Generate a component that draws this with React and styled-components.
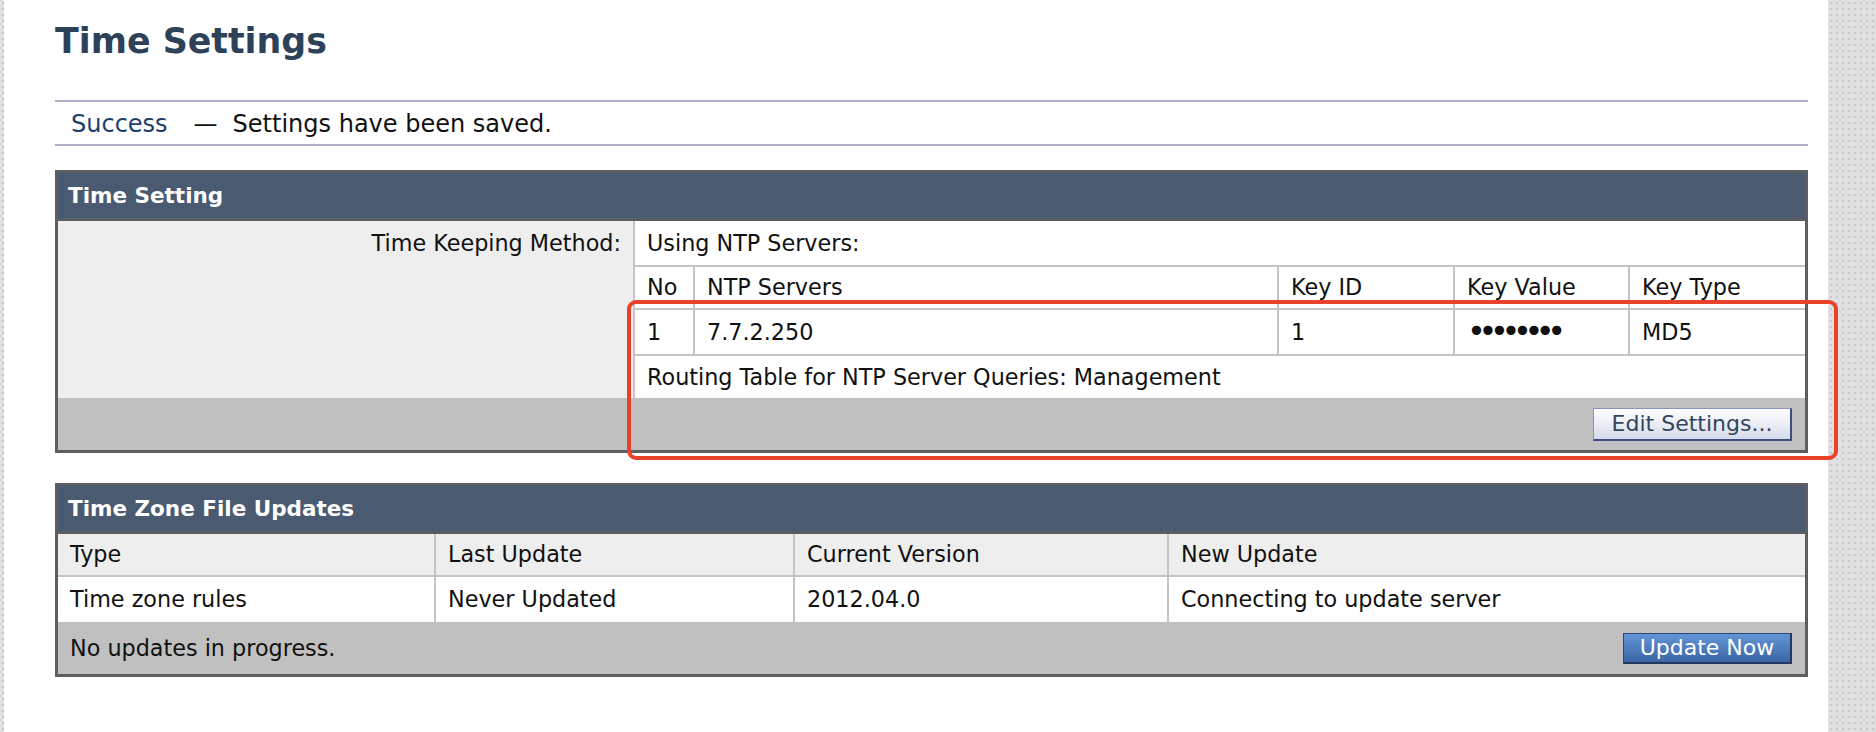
import React from 'react';
import styled, { createGlobalStyle } from 'styled-components';

const GlobalStyle = createGlobalStyle`
  body {
    margin: 0;
    background: #ffffff;
    font-family: "DejaVu Sans", Verdana, sans-serif;
    color: #111111;
  }
`;

const Page = styled.div`
  display: flex;
  min-height: 732px;
`;

// dotted grey gutters left and right
const Strip = styled.div`
  width: ${(p) => p.$w}px;
  flex-shrink: 0;
  background-color: #e0e0e0;
  background-image: radial-gradient(#c8c8c8 1px, transparent 1.4px);
  background-size: 6px 6px;
`;

const Main = styled.main`
  flex: 1;
  min-width: 0;
  padding: 24px 20px 0 51px;
`;

const Title = styled.h1`
  margin: 0;
  font-size: 34.8px;
  line-height: 34px;
  font-weight: bold;
  color: #2d4259;
`;

const Notice = styled.div`
  margin-top: 42px;
  box-sizing: border-box;
  height: 46px;
  border-top: 2px solid #adadc6;
  border-bottom: 2px solid #adadc6;
  padding: 3px 16px 0;
  line-height: 39px;
  font-size: 24px;
`;

const Status = styled.span`
  color: #1d3f6e;
`;

const Dash = styled.span`
  margin: 0 15px 0 26px;
`;

const PanelWrap = styled.div`
  position: relative;
  margin-top: ${(p) => p.$top}px;
`;

const Panel = styled.section`
  border: 3px solid #5e5e5e;
  font-size: 22.3px;
`;

const PanelHeader = styled.div`
  height: 48px;
  box-sizing: border-box;
  border-bottom: 3px solid #5a5d62;
  background: #4a5a71;
  color: #ffffff;
  font-weight: bold;
  font-size: 21.5px;
  line-height: 45px;
  padding-left: 10px;
`;

const SettingBody = styled.div`
  display: grid;
  grid-template-columns: 575px 1fr;
`;

const Label = styled.div`
  background: #eeeeee;
  text-align: right;
  padding-right: 12px;
  line-height: 44px;
`;

const Values = styled.div`
  display: grid;
  grid-template-columns: 58px 584px 176px 175px 1fr;
  border-left: 2px solid #c4c4c4;
  background: #ffffff;
`;

const Cell = styled.div`
  height: ${(p) => p.$h}px;
  line-height: ${(p) => p.$h}px;
  padding-left: 12px;
  white-space: nowrap;
  overflow: hidden;
  grid-column: ${(p) => (p.$span ? '1 / -1' : 'auto')};
  border-bottom: ${(p) => (p.$line ? '2px solid #c4c4c4' : 'none')};
  border-left: ${(p) => (p.$sep ? '2px solid #c4c4c4' : 'none')};
  background: ${(p) => p.$bg || 'transparent'};
`;

const Dots = styled.span`
  font-size: 32px;
  letter-spacing: -7.4px;
  vertical-align: -2px;
  line-height: 1;
`;

const Footer = styled.div`
  display: flex;
  align-items: center;
  justify-content: space-between;
  height: 52px;
  background: #c0c0c0;
  padding: 0 13px 0 12px;
`;

const EditButton = styled.button`
  height: 33px;
  width: 199px;
  padding: 0;
  font-family: inherit;
  font-size: 22px;
  color: #33455a;
  background: linear-gradient(#ffffff, #d6dbec);
  border: 1px solid #8a93bd;
  border-right: 2px solid #3e4d7c;
  border-bottom: 2px solid #3e4d7c;
`;

const UpdateButton = styled.button`
  height: 31px;
  width: 169px;
  padding: 0;
  font-family: inherit;
  font-size: 22px;
  color: #ffffff;
  background: linear-gradient(#6395d6, #3a66a5);
  border: 1px solid #2b4a7c;
  border-right: 2px solid #22385e;
  border-bottom: 2px solid #22385e;
`;

const ZoneGrid = styled.div`
  display: grid;
  grid-template-columns: 376px 359px 374px 1fr;
`;

// red annotation drawn over the NTP rows
const Highlight = styled.div`
  position: absolute;
  left: 572px;
  top: 130px;
  width: 1211px;
  height: 160px;
  box-sizing: border-box;
  border: 4px solid #e8432a;
  border-radius: 9px;
  pointer-events: none;
`;

const ntpHead = ['No', 'NTP Servers', 'Key ID', 'Key Value', 'Key Type'];
const zoneHead = ['Type', 'Last Update', 'Current Version', 'New Update'];
const zoneRow = ['Time zone rules', 'Never Updated', '2012.04.0', 'Connecting to update server'];

export default function App() {
  return (
    <>
      <GlobalStyle />
      <Page>
        <Strip $w={4} />
        <Main>
          <Title>Time Settings</Title>
          <Notice>
            <Status>Success</Status>
            <Dash>—</Dash>
            Settings have been saved.
          </Notice>

          <PanelWrap $top={24}>
            <Panel>
              <PanelHeader>Time Setting</PanelHeader>
              <SettingBody>
                <Label>Time Keeping Method:</Label>
                <Values>
                  <Cell $span $h={44} $line>Using NTP Servers:</Cell>
                  {ntpHead.map((h, i) => (
                    <Cell key={h} $h={41} $line $sep={i > 0}>{h}</Cell>
                  ))}
                  <Cell $h={44} $line>1</Cell>
                  <Cell $h={44} $line $sep>7.7.2.250</Cell>
                  <Cell $h={44} $line $sep>1</Cell>
                  <Cell $h={44} $line $sep><Dots>••••••••</Dots></Cell>
                  <Cell $h={44} $line $sep>MD5</Cell>
                  <Cell $span $h={42}>Routing Table for NTP Server Queries: Management</Cell>
                </Values>
              </SettingBody>
              <Footer>
                <span />
                <EditButton>Edit Settings...</EditButton>
              </Footer>
            </Panel>
            <Highlight />
          </PanelWrap>

          <PanelWrap $top={30}>
            <Panel>
              <PanelHeader>Time Zone File Updates</PanelHeader>
              <ZoneGrid>
                {zoneHead.map((h, i) => (
                  <Cell key={h} $h={41} $line $sep={i > 0} $bg="#eeeeee">{h}</Cell>
                ))}
                {zoneRow.map((v, i) => (
                  <Cell key={v} $h={45} $sep={i > 0} $bg="#ffffff">{v}</Cell>
                ))}
              </ZoneGrid>
              <Footer>
                <span>No updates in progress.</span>
                <UpdateButton>Update Now</UpdateButton>
              </Footer>
            </Panel>
          </PanelWrap>
        </Main>
        <Strip $w={48} />
      </Page>
    </>
  );
}
